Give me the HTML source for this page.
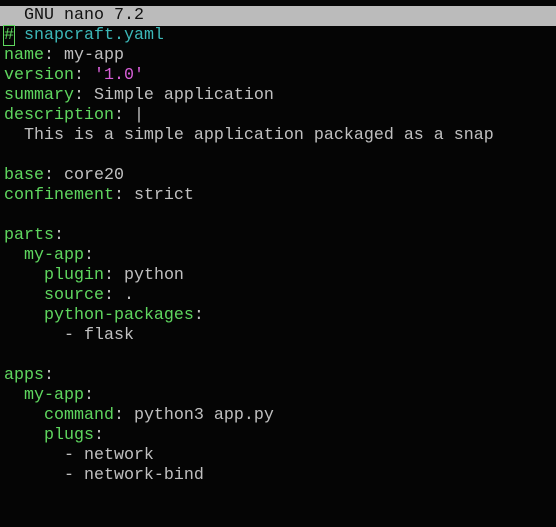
<!DOCTYPE html><html><head><style>
body{margin:0;background:#050505;width:556px;height:527px;overflow:hidden}
pre{margin:0;position:absolute;top:6px;left:4px;font-family:"Liberation Mono",monospace;font-size:16.67px;line-height:20px;color:#c0c0c0}
.bar{position:absolute;top:6px;left:0;width:556px;height:20px;background:#bbbbbb}
.t{color:#111}.k{color:#5fd75f}.s{color:#d75fd7}.c{color:#3cb8b8}
.cur{outline:1px solid #5fd75f;color:#5fd75f}
</style></head><body><div class="bar"></div><pre><span class="t">  GNU nano 7.2</span>
<span class="cur">#</span><span class="c"> snapcraft.yaml</span>
<span class="k">name</span>: my-app
<span class="k">version</span>: <span class="s">'1.0'</span>
<span class="k">summary</span>: Simple application
<span class="k">description</span>: |
  This is a simple application packaged as a snap

<span class="k">base</span>: core20
<span class="k">confinement</span>: strict

<span class="k">parts</span>:
  <span class="k">my-app</span>:
    <span class="k">plugin</span>: python
    <span class="k">source</span>: .
    <span class="k">python-packages</span>:
      - flask

<span class="k">apps</span>:
  <span class="k">my-app</span>:
    <span class="k">command</span>: python3 app.py
    <span class="k">plugs</span>:
      - network
      - network-bind</pre></body></html>
